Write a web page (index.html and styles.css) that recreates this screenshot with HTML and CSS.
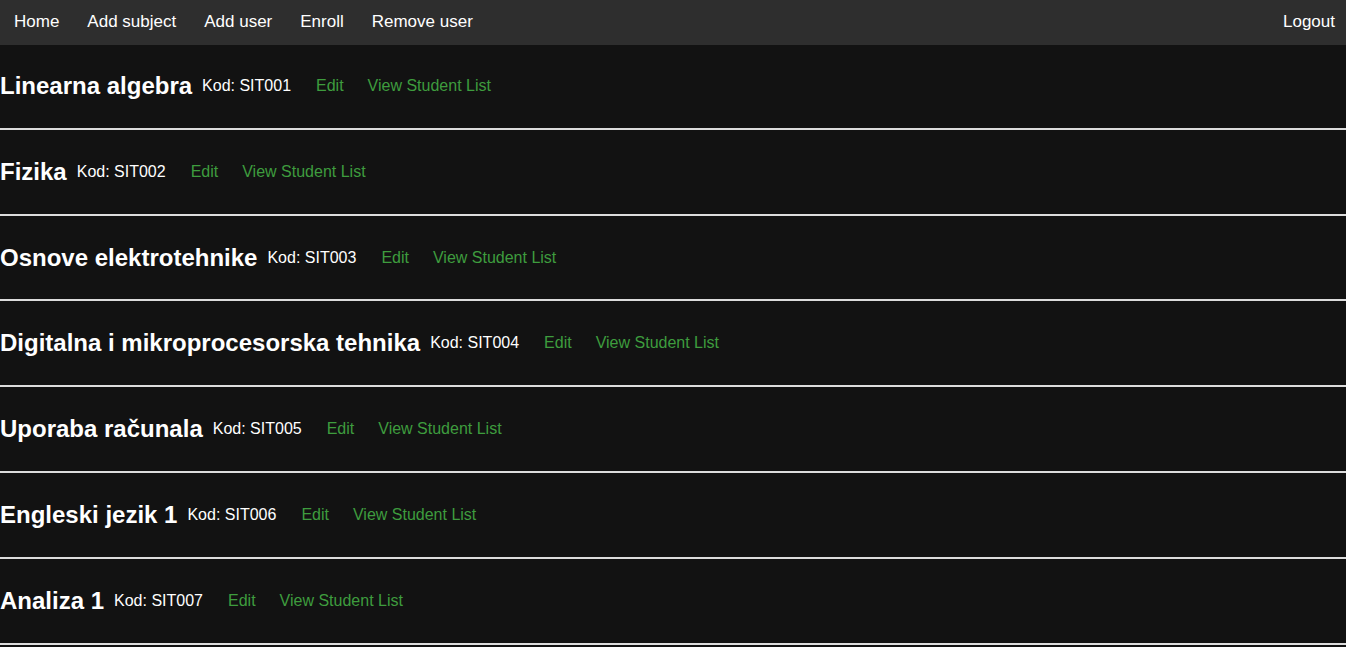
FILE: index.html
```html
<!DOCTYPE html>
<html lang="hr">
<head>
<meta charset="utf-8">
<title>Subjects</title>
<link rel="stylesheet" href="styles.css">
</head>
<body>
<nav class="navbar">
  <div class="nav-left">
    <a class="nav-link" href="#">Home</a>
    <a class="nav-link" href="#">Add subject</a>
    <a class="nav-link" href="#">Add user</a>
    <a class="nav-link" href="#">Enroll</a>
    <a class="nav-link" href="#">Remove user</a>
  </div>
  <a class="nav-link logout" href="#">Logout</a>
</nav>
<main class="subjects">
  <div class="subject">
    <h2 class="subject-name">Linearna algebra</h2>
    <span class="code">Kod: SIT001</span>
    <a class="action" href="#">Edit</a>
    <a class="action" href="#">View Student List</a>
  </div>
  <div class="subject">
    <h2 class="subject-name">Fizika</h2>
    <span class="code">Kod: SIT002</span>
    <a class="action" href="#">Edit</a>
    <a class="action" href="#">View Student List</a>
  </div>
  <div class="subject">
    <h2 class="subject-name">Osnove elektrotehnike</h2>
    <span class="code">Kod: SIT003</span>
    <a class="action" href="#">Edit</a>
    <a class="action" href="#">View Student List</a>
  </div>
  <div class="subject">
    <h2 class="subject-name">Digitalna i mikroprocesorska tehnika</h2>
    <span class="code">Kod: SIT004</span>
    <a class="action" href="#">Edit</a>
    <a class="action" href="#">View Student List</a>
  </div>
  <div class="subject">
    <h2 class="subject-name">Uporaba računala</h2>
    <span class="code">Kod: SIT005</span>
    <a class="action" href="#">Edit</a>
    <a class="action" href="#">View Student List</a>
  </div>
  <div class="subject">
    <h2 class="subject-name">Engleski jezik 1</h2>
    <span class="code">Kod: SIT006</span>
    <a class="action" href="#">Edit</a>
    <a class="action" href="#">View Student List</a>
  </div>
  <div class="subject">
    <h2 class="subject-name">Analiza 1</h2>
    <span class="code">Kod: SIT007</span>
    <a class="action" href="#">Edit</a>
    <a class="action" href="#">View Student List</a>
  </div>
</main>
</body>
</html>
```
FILE: styles.css
```css
html, body {
  margin: 0;
  padding: 0;
  background: #121212;
  color: #ffffff;
  font-family: "Liberation Sans", Arial, sans-serif;
}

.navbar {
  display: flex;
  justify-content: space-between;
  align-items: center;
  height: 45px;
  background: #2e2e2e;
  padding: 0 11px 0 0;
}

.nav-left {
  display: flex;
}

.nav-link {
  color: #ffffff;
  text-decoration: none;
  font-size: 17px;
  line-height: 20px;
  padding: 0 14px;
  position: relative;
  top: -1px;
}

.logout {
  padding: 0;
}

.subjects {
  display: flex;
  flex-direction: column;
  margin-top: -1px;
}

.subject {
  display: flex;
  align-items: center;
  padding: 28px 0 27.83px;
  border-bottom: 2px solid #dcdcdc;
}

.subject-name {
  margin: 0 10px 0 0;
  font-size: 24px;
  line-height: 28px;
  font-weight: bold;
}

.code {
  font-size: 16px;
  margin-right: 25px;
}

.action {
  color: #3e9c3e;
  text-decoration: none;
  font-size: 16px;
  margin-right: 24px;
}
```
